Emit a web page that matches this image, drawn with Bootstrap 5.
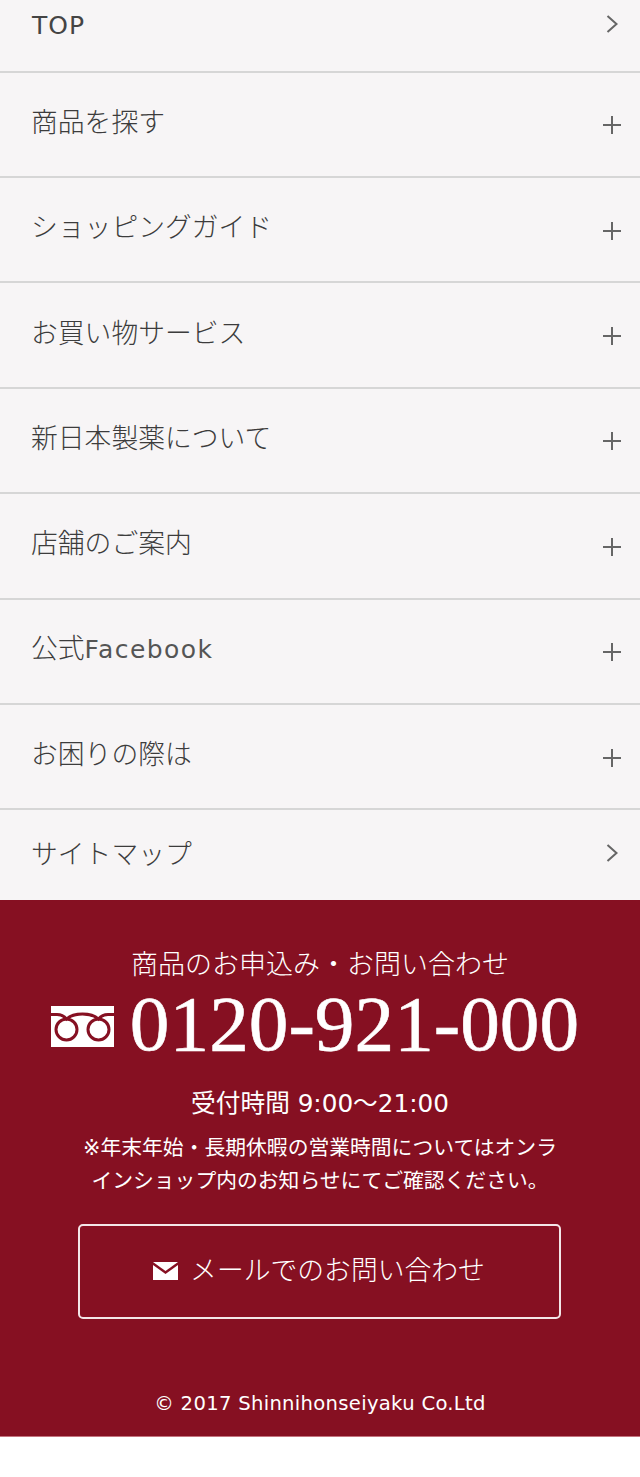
<!DOCTYPE html>
<html lang="ja">
<head>
<meta charset="utf-8">
<title>メニュー</title>
<link href="https://cdn.jsdelivr.net/npm/bootstrap@5.3.0/dist/css/bootstrap.min.css" rel="stylesheet">
<style>
html,body{background:#fff;}
body{font-family:"DejaVu Sans","Noto Sans CJK JP",sans-serif;overflow:hidden;}
.cjk{font-family:"Noto Sans CJK JP",sans-serif;font-weight:300;}
.menu-list{background:#f7f5f6;}
.menu-row{height:105.4px;border-bottom:2px solid #d6d6d6;padding:0 19px 0 32px;color:#3c3c3c;font-size:26.8px;text-decoration:none;}
.menu-label{line-height:1;padding-bottom:6px;}
.menu-label.cjk{margin-left:-1px;}
.menu-latin{font-family:"DejaVu Sans",sans-serif;font-size:25px;font-weight:400;letter-spacing:1.4px;color:#555;}
.menu-row.first{height:72.600px;}
.menu-row.first .menu-label{padding-bottom:20px;}
.menu-row.first .menu-latin{color:#444;letter-spacing:1px;}
.menu-row.last{height:89.600px;border-bottom:0;}
.menu-row.last .menu-label{padding-bottom:4px;}
.menu-row svg{flex:none;margin-top:2px;}
.menu-row.first svg{margin-top:-22px;margin-right:3px;}
.menu-row.last svg{margin-top:-4px;margin-right:3px;}
.foot{background:#861022;color:#fff;height:537px;border-bottom:1px solid #c4747f;padding-top:47px;}
.foot-lead{font-size:27px;line-height:32px;margin:0;}
.phone{margin-top:5px;height:78px;padding-right:10px;}
.phone svg{margin-top:8px;}
.phone-num{font-family:"Liberation Serif",serif;font-size:79.300px;line-height:78px;-webkit-text-stroke:.6px #fff;}
.hours{font-size:24.700px;line-height:32px;margin:26px 0 0;}
.note{font-size:20.800px;line-height:33px;margin:12px 0 0;}
.mail-btn{width:483px;height:95px;margin:26px auto 0;border:2px solid #f3e6e8;border-radius:5px;color:#fff;font-size:26.800px;text-decoration:none;transform:translateX(-1px);}
.mail-text{margin-top:-5px;}
.copy{font-size:19.600px;line-height:24px;margin:73px 0 0;letter-spacing:.3px;}
</style>
</head>
<body>
<nav class="menu-list d-flex flex-column">
<a class="menu-row first d-flex align-items-center justify-content-between" href="#"><span class="menu-label"><span class="menu-latin">TOP</span></span><svg width="12" height="20" viewBox="0 0 12 20"><path d="M1.500 2l9 8-9 8" fill="none" stroke="#666" stroke-width="2"/></svg></a>
<a class="menu-row d-flex align-items-center justify-content-between" href="#"><span class="menu-label cjk">商品を探す</span><svg width="18" height="18" viewBox="0 0 18 18"><path d="M9 0v18M0 9h18" stroke="#666" stroke-width="2"/></svg></a>
<a class="menu-row d-flex align-items-center justify-content-between" href="#"><span class="menu-label cjk">ショッピングガイド</span><svg width="18" height="18" viewBox="0 0 18 18"><path d="M9 0v18M0 9h18" stroke="#666" stroke-width="2"/></svg></a>
<a class="menu-row d-flex align-items-center justify-content-between" href="#"><span class="menu-label cjk">お買い物サービス</span><svg width="18" height="18" viewBox="0 0 18 18"><path d="M9 0v18M0 9h18" stroke="#666" stroke-width="2"/></svg></a>
<a class="menu-row d-flex align-items-center justify-content-between" href="#"><span class="menu-label cjk">新日本製薬について</span><svg width="18" height="18" viewBox="0 0 18 18"><path d="M9 0v18M0 9h18" stroke="#666" stroke-width="2"/></svg></a>
<a class="menu-row d-flex align-items-center justify-content-between" href="#"><span class="menu-label cjk">店舗のご案内</span><svg width="18" height="18" viewBox="0 0 18 18"><path d="M9 0v18M0 9h18" stroke="#666" stroke-width="2"/></svg></a>
<a class="menu-row d-flex align-items-center justify-content-between" href="#"><span class="menu-label cjk">公式<span class="menu-latin">Facebook</span></span><svg width="18" height="18" viewBox="0 0 18 18"><path d="M9 0v18M0 9h18" stroke="#666" stroke-width="2"/></svg></a>
<a class="menu-row d-flex align-items-center justify-content-between" href="#"><span class="menu-label cjk">お困りの際は</span><svg width="18" height="18" viewBox="0 0 18 18"><path d="M9 0v18M0 9h18" stroke="#666" stroke-width="2"/></svg></a>
<a class="menu-row last d-flex align-items-center justify-content-between" href="#"><span class="menu-label cjk">サイトマップ</span><svg width="12" height="20" viewBox="0 0 12 20"><path d="M1.500 2l9 8-9 8" fill="none" stroke="#666" stroke-width="2"/></svg></a>
</nav>
<footer class="foot text-center">
<p class="foot-lead cjk">商品のお申込み・お問い合わせ</p>
<div class="phone d-flex align-items-center justify-content-center gap-3">
<svg width="63" height="41" viewBox="0 0 63 41"><rect width="63" height="41" fill="#fff"/><g fill="none" stroke="#861022" stroke-width="3"><circle cx="15.500" cy="23.500" r="10.500"/><circle cx="47.500" cy="23.500" r="10.500"/><path d="M0 8.500H6C10 8.500 13 10 15.500 13C20 9 26 8 31.500 8S43 9 47.500 13C50 10 53 8.500 57 8.500H63"/></g></svg>
<span class="phone-num">0120-921-000</span>
</div>
<p class="hours">受付時間 9:00～21:00</p>
<p class="note">※年末年始・長期休暇の営業時間についてはオンラ<br>インショップ内のお知らせにてご確認ください。</p>
<a class="mail-btn d-flex align-items-center justify-content-center gap-2" href="#"><svg width="25" height="18" viewBox="0 0 25 18"><path d="M0 0h25L12.500 9z" fill="#fff"/><path d="M0 3l12.500 9L25 3v15H0z" fill="#fff"/></svg><span class="cjk ms-1 mail-text">メールでのお問い合わせ</span></a>
<p class="copy">© 2017 Shinnihonseiyaku Co.Ltd</p>
</footer>
</body>
</html>
